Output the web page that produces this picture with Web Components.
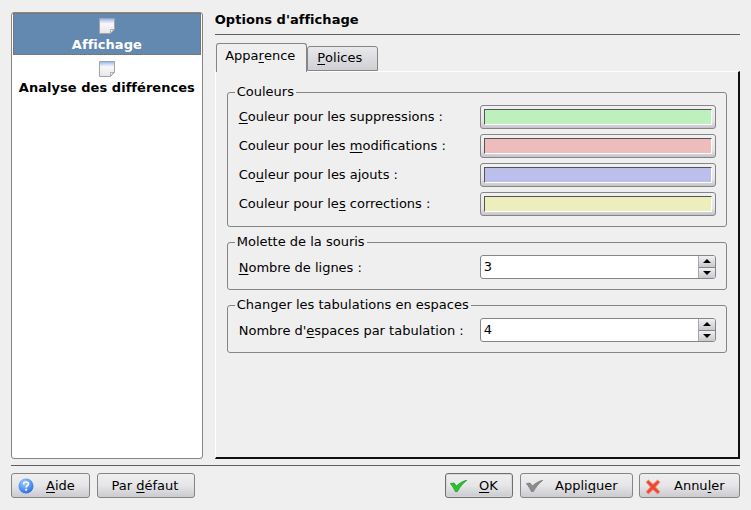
<!DOCTYPE html>
<html><head><meta charset="utf-8"><style>
html,body{margin:0;padding:0;background:#efefef}
body{font:13px "DejaVu Sans",sans-serif;color:#000}
u{text-underline-offset:2px}
svg[slot]{display:block}
</style></head><body>
<x-dialog>
  <x-sidebar slot="side">
    <x-nav-item selected>Affichage</x-nav-item>
    <x-nav-item>Analyse des différences</x-nav-item>
  </x-sidebar>
  <x-page slot="main" title-text="Options d'affichage">
    <x-tab slot="tabs" active>Appa<u>r</u>ence</x-tab>
    <x-tab slot="tabs"><u>P</u>olices</x-tab>
    <x-group label="Couleurs">
      <x-row shift><span slot="label"><u>C</u>ouleur pour les suppressions :</span><x-swatch color="#bdf0bc"></x-swatch></x-row>
      <x-row shift><span slot="label">Couleur pour les <u>m</u>odifications :</span><x-swatch color="#eebcbc"></x-swatch></x-row>
      <x-row shift><span slot="label">Co<u>u</u>leur pour les ajouts :</span><x-swatch color="#bcbeec"></x-swatch></x-row>
      <x-row shift><span slot="label">Couleur pour le<u>s</u> corrections :</span><x-swatch color="#eeeebc"></x-swatch></x-row>
    </x-group>
    <x-group label="Molette de la souris">
      <x-row><span slot="label"><u>N</u>ombre de lignes :</span><x-spin value="3"></x-spin></x-row>
    </x-group>
    <x-group label="Changer les tabulations en espaces">
      <x-row><span slot="label">Nombre d'<u>e</u>spaces par tabulation :</span><x-spin value="4"></x-spin></x-row>
    </x-group>
  </x-page>
  <x-button slot="left" w="79" pad="34" ix="6" iy="4">
    <svg slot="icon" width="16" height="16" viewBox="0 0 16 16"><defs><radialGradient id="h" cx=".4" cy=".3" r=".8"><stop offset="0" stop-color="#a9cdfb"/><stop offset=".6" stop-color="#4b8ef0"/><stop offset="1" stop-color="#2a62cf"/></radialGradient></defs><circle cx="8" cy="8" r="7.500" fill="url(#h)"/><path d="M5.600 6.200C5.700 4.700 6.800 4 8.100 4c1.400 0 2.400.8 2.400 2 0 1.800-2.400 1.800-2.400 3.600" fill="none" stroke="#fff" stroke-width="1.700"/><rect x="7.200" y="10.800" width="1.800" height="1.800" fill="#fff"/></svg>
    <u>A</u>ide</x-button>
  <x-button slot="left" w="98" center>Par <u>d</u>éfaut</x-button>
  <x-button slot="right" w="68" pad="33" focused ix="4" iy="6">
    <svg slot="icon" width="17" height="12" viewBox="0 0 17 12"><path d="M.3 3.600L4 3l2.500 3C9 3.500 13 1 16.800.3 13 3 10 7 7.200 11.800H5.500C4 8.500 2 5.500.3 3.600z" fill="#22c825" stroke="#11801a" stroke-width=".6"/></svg>
    <u>O</u>K</x-button>
  <x-button slot="right" w="113" pad="34" ix="5" iy="6">
    <svg slot="icon" width="17" height="12" viewBox="0 0 17 12"><path d="M.3 3.600L4 3l2.500 3C9 3.500 13 1 16.800.3 13 3 10 7 7.200 11.800H5.500C4 8.500 2 5.500.3 3.600z" fill="#8c8c8c" stroke="#6a6a6a" stroke-width=".6"/></svg>
    Appli<u>q</u>uer</x-button>
  <x-button slot="right" w="101" pad="34" ix="5" iy="5">
    <svg slot="icon" width="16" height="16" viewBox="0 0 16 16"><path d="M1 3.200L3.400 1 8 5.200 12.600 1 15 3.200 10.600 8 15 12.800 12.600 15 8 10.800 3.400 15 1 12.800 5.400 8z" fill="#ec4a30" stroke="#f29a88" stroke-width=".9"/></svg>
    Annu<u>l</u>er</x-button>
</x-dialog>
<script>
const def=(name,css,html)=>customElements.define(name,class extends HTMLElement{
  connectedCallback(){ if(this.shadowRoot)return;
    const r=this.attachShadow({mode:"open"});
    r.innerHTML=`<style>${css}</style>`+(typeof html==="function"?html(this):html);
  }
});
def("x-dialog",`
:host{display:flex;flex-direction:column;width:751px;height:510px;box-sizing:border-box;padding:12px 11px 0;background:#efefef}
.top{display:flex;gap:12px;height:447px}
hr{margin:6px 0 7px;height:1px;border:0;background:#5f5f5f;width:729px}
.bar{display:flex;justify-content:space-between;width:729px}
.g{display:flex;gap:6px}
.l{gap:7px}
`,`<div class="top"><slot name="side"></slot><slot name="main"></slot></div><hr><div class="bar"><div class="g l"><slot name="left"></slot></div><div class="g"><slot name="right"></slot></div></div>`);
def("x-sidebar",`
:host{display:block;width:192px;box-sizing:border-box;height:447px;background:#fff;border:1px solid #858585;border-radius:3px;padding:0 1px}
`,`<slot></slot>`);
def("x-nav-item",`
:host{display:flex;flex-direction:column;align-items:center;height:42px;box-sizing:border-box;padding-top:6px;font-weight:bold;font-size:13px;color:#000;white-space:nowrap;letter-spacing:.04px}
:host([selected]){padding-top:5px;background:#6389b0;color:#fff;outline:1px dotted #8a6a45;outline-offset:-1px}
svg{display:block;margin-bottom:3px}
span{line-height:15px}
`,`<svg width="16" height="16" viewBox="0 0 16 16"><defs><linearGradient id="p" x1="0" y1="0" x2="0" y2="1"><stop offset="0" stop-color="#8aa8f2"/><stop offset=".15" stop-color="#c4d2f6"/><stop offset=".35" stop-color="#f8f8fb"/><stop offset="1" stop-color="#e6e6e8"/></linearGradient></defs><path d="M.5.500h15v11l-4 4H.5z" fill="url(#p)" stroke="#a3a3a8"/><path d="M11.500 15v-3.500H15z" fill="#fff" stroke="#999" stroke-width=".8"/></svg><span><slot></slot></span>`);
def("x-page",`
:host{display:flex;flex-direction:column;width:526px;height:447px}
h1{margin:0;height:22px;box-sizing:border-box;padding:0;font:bold 13px/15px "DejaVu Sans",sans-serif;letter-spacing:.04px}
.line{height:1px;background:#5f5f5f;margin-bottom:8px}
.tabs{display:flex;align-items:flex-end;height:29px;margin-left:1px;margin-bottom:-1px;position:relative;z-index:1}
.pane{flex:1;box-sizing:border-box;padding:12px 11px 0 11px;background:#efefef;border-top:1px solid #fff;border-left:1px solid #fff;border-right:2px solid #111;border-bottom:2px solid #111;display:flex;flex-direction:column;gap:7px}
`,t=>`<h1>${t.getAttribute("title-text")}</h1><div class="line"></div><div class="tabs"><slot name="tabs"></slot></div><div class="pane"><slot></slot></div>`);
def("x-tab",`
:host{display:flex;align-items:center;justify-content:center;box-sizing:border-box;height:25px;width:71px;margin-bottom:1px;border:1px solid #858585;border-radius:3px 3px 0 0;background:linear-gradient(#e9e9ec,#cfcfd4);font-size:13px;padding:0 5px 2px 0}
:host([active]){height:29px;width:91px;margin-bottom:0;background:#efefef;border-bottom:0;padding:0 2px 5px 0}
`,`<slot></slot>`);
def("x-group",`
:host{display:block}
fieldset{margin:0;padding:5px 10px 10px 11px;border:1px solid #858585;border-radius:3px;min-width:0}
legend{margin-left:-4px;padding:0 2px;font-size:13px;line-height:16px}
.c{display:flex;flex-direction:column;gap:5px}
`,t=>`<fieldset><legend>${t.getAttribute("label")}</legend><div class="c"><slot></slot></div></fieldset>`);
def("x-row",`
:host{display:grid;grid-template-columns:241px 236px;align-items:center;height:24px;font-size:13px}
.l{white-space:nowrap}
:host([shift]) .l{padding-bottom:1px}
`,`<div class="l"><slot name="label"></slot></div><slot></slot>`);
def("x-swatch",`
:host{display:block;box-sizing:border-box;height:24px;padding:3px;border:1px solid #858585;border-radius:3px;background:linear-gradient(#f1f1f3,#e6e6e9 70%,#c4c4ca)}
i{display:block;height:16px;box-sizing:border-box;border-top:1px solid #555;border-left:1px solid #555;border-right:1px solid #fff;border-bottom:1px solid #fff;background:var(--c)}
`,t=>`<i style="--c:${t.getAttribute("color")}"></i>`);
def("x-spin",`
:host{display:flex;box-sizing:border-box;height:24px;border:1px solid #858585;border-radius:3px;background:#fff;overflow:hidden}
.v{flex:1;padding-left:3px;line-height:22px;font-size:13px}
.b{display:flex;flex-direction:column;width:16px;border-left:1px solid #a8a8a8}
.b div{flex:1;display:flex;align-items:center;justify-content:center;background:linear-gradient(#f0f0f2,#c8c8ce)}
.b div+div{border-top:1px solid #858585}
svg{display:block}
`,t=>`<div class="v">${t.getAttribute("value")}</div><div class="b"><div><svg width="8" height="4"><path d="M4 0L8 4H0z"/></svg></div><div><svg width="8" height="4"><path d="M0 0H8L4 4z"/></svg></div></div>`);
def("x-button",`
:host{display:flex;align-items:center;box-sizing:border-box;height:25px;border:1px solid #858585;border-radius:3px;background:linear-gradient(#efeff0,#e6e6e8 50%,#cbcbd0);font-size:13px;white-space:nowrap;position:relative}
:host([center]){justify-content:center;padding-right:2px}
:host([focused]){box-shadow:inset 0 0 0 1px #d8d8dc;border-color:#6f6f6f;margin-right:1px}
.i{position:absolute}
.t{padding-bottom:1px}
`,t=>{t.style.width=t.getAttribute("w")+"px";const p=t.getAttribute("pad");return `<span class="i" style="left:${t.getAttribute("ix")||0}px;top:${t.getAttribute("iy")||0}px"><slot name="icon"></slot></span><span class="t" style="padding-left:${p||0}px"><slot></slot></span>`});
</script>
</body></html>
